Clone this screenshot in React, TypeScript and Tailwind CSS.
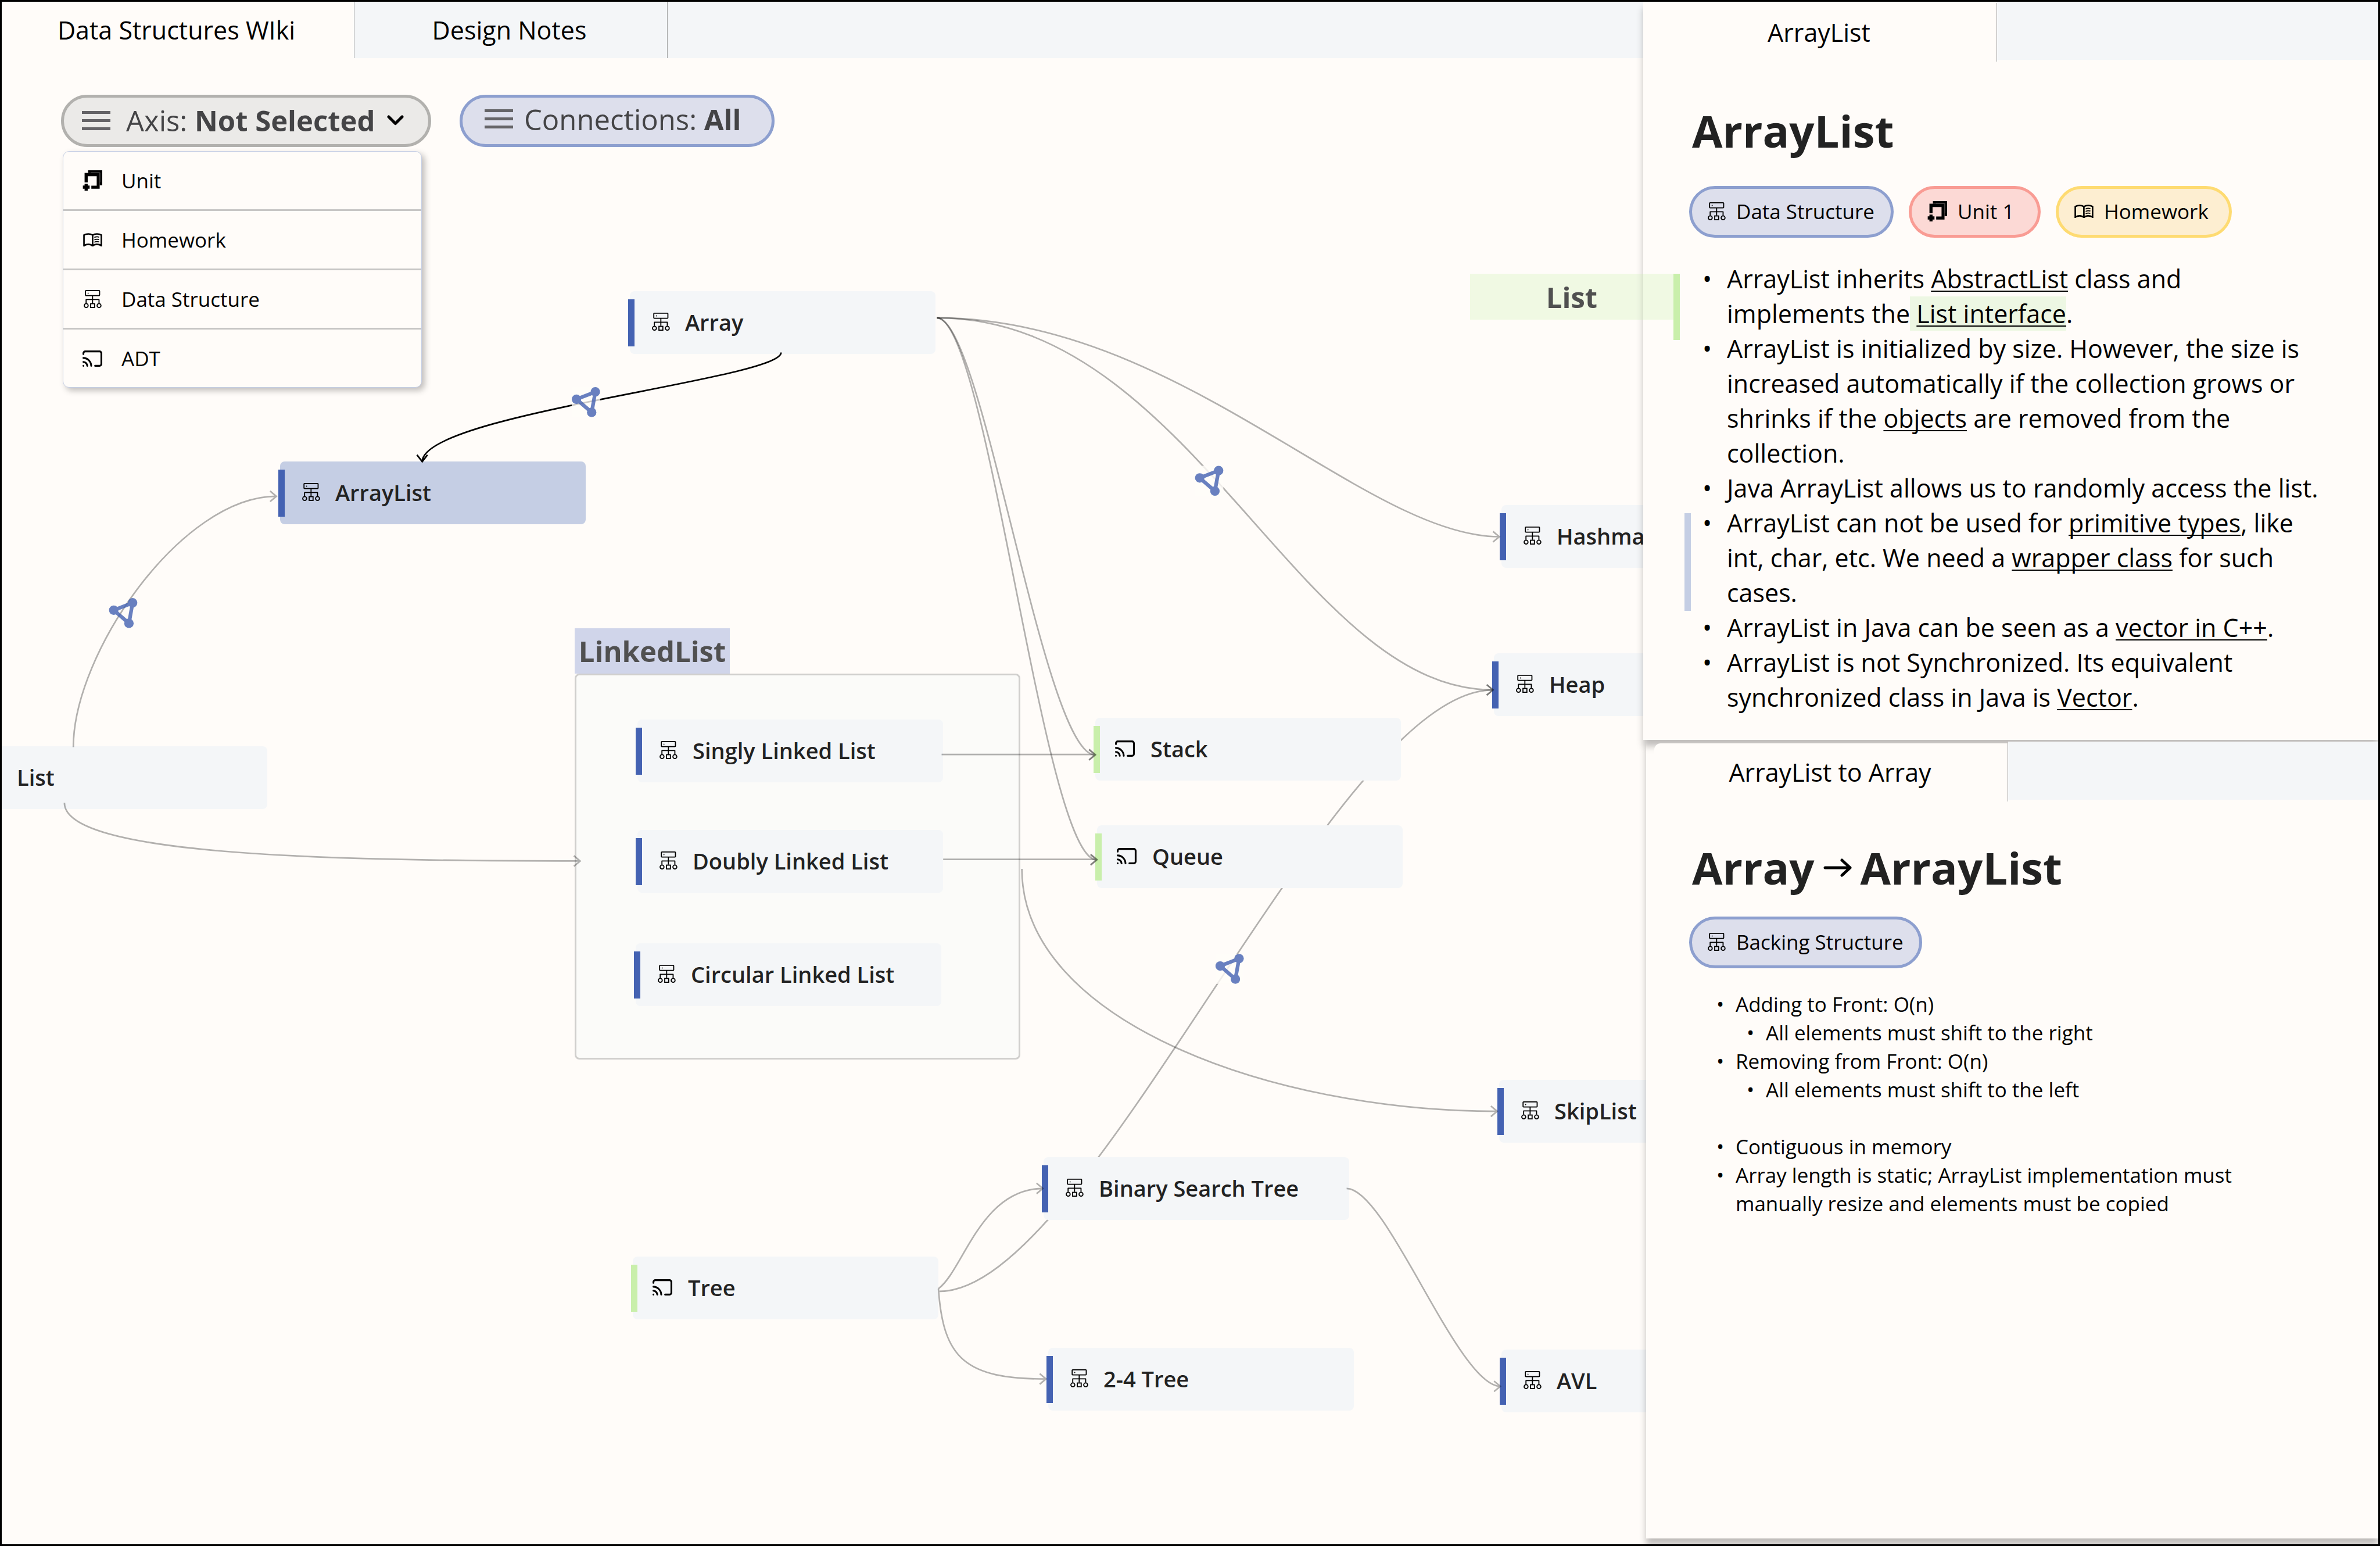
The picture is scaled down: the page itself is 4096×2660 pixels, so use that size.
import type { ReactNode } from "react";

function StructureIcon() {
  return (
    <svg viewBox="0 0 34 34" className="h-[31px] w-[31px] shrink-0" fill="none" stroke="currentColor" strokeWidth="2" aria-hidden="true">
      <rect x="3.5" y="1" width="26.6" height="9.6" rx="1" />
      <circle cx="8.4" cy="6" r="1" fill="currentColor" stroke="none" />
      <path d="M16.8 11v14M4.6 25v-7h24.4v7" strokeLinejoin="round" />
      <circle cx="4.8" cy="29.3" r="3.7" />
      <circle cx="29" cy="29.3" r="3.7" />
      <rect x="13.2" y="25.8" width="7.4" height="7.2" />
    </svg>
  );
}

function UnitIcon() {
  return (
    <svg viewBox="0 0 38 39" className="h-[35px] w-[34px] shrink-0" fill="currentColor" aria-hidden="true">
      <path d="M10.7 0H38V28.7H33V5H10.7Z" />
      <path d="M4 5H33V35.5H17V29.5H27.3V11.3H10V23H4Z" />
      <path d="M4 26H10V29.3H13.7V35.5H10V39H4V35.5H0.7V29.3H4Z" />
      <path d="M16.5 4.4H33.8V23" fill="none" stroke="#777" strokeWidth="0.7" />
    </svg>
  );
}

function BookIcon() {
  return (
    <svg viewBox="0 0 37 26" className="h-[23px] w-[33px] shrink-0" fill="none" stroke="currentColor" strokeWidth="3" aria-hidden="true">
      <path d="M1.6 26V3.8C6 1 14 .8 18.4 4C22.8 .8 31 1 35.3 3.8V26" />
      <path d="M2 24C8 20.6 15 21.4 18.4 25C21.8 21.4 29 20.6 35 24M18.4 4V25" />
      <path d="M21.8 8.6q4.5-2.2 9.2-.6M21.8 13.2q4.5-2.2 9.2-.6M21.8 17.8q4.5-2.2 9.2-.6" strokeWidth="2" />
    </svg>
  );
}

function CastIcon() {
  return (
    <svg viewBox="1 3 22 18" className="h-[28px] w-[34px] shrink-0" fill="none" stroke="currentColor" strokeWidth="2" strokeLinecap="round" strokeLinejoin="round" aria-hidden="true">
      <path d="M2 7V6a2 2 0 0 1 2-2h16a2 2 0 0 1 2 2v12a2 2 0 0 1-2 2h-5" />
      <path d="M2 11.3a9 9 0 0 1 8.7 8.7M2 15.7a5 5 0 0 1 4.3 4.3M2 20h.01" />
    </svg>
  );
}

function MenuIcon() {
  return (
    <svg viewBox="0 0 49 33" className="h-[33px] w-[49px] shrink-0" fill="#656467" aria-hidden="true">
      <rect width="49" height="5" />
      <rect y="14" width="49" height="5" />
      <rect y="28" width="49" height="5" />
    </svg>
  );
}

type Kind = "structure" | "adt" | "plain";

const nodes: { label: string; kind: Kind; place: string; selected?: boolean }[] = [
  { label: "Array", kind: "structure", place: "left-[1081px] top-[401px]" },
  { label: "ArrayList", kind: "structure", place: "left-[479px] top-[694px]", selected: true },
  { label: "List", kind: "plain", place: "left-[-69px] top-[1184px]" },
  { label: "Singly Linked List", kind: "structure", place: "left-[1094px] top-[1138px]" },
  { label: "Doubly Linked List", kind: "structure", place: "left-[1094px] top-[1328px]" },
  { label: "Circular Linked List", kind: "structure", place: "left-[1091px] top-[1523px]" },
  { label: "Stack", kind: "adt", place: "left-[1882px] top-[1135px]" },
  { label: "Queue", kind: "adt", place: "left-[1885px] top-[1320px]" },
  { label: "Hashmap", kind: "structure", place: "left-[2581px] top-[769px]" },
  { label: "Heap", kind: "structure", place: "left-[2568px] top-[1024px]" },
  { label: "SkipList", kind: "structure", place: "left-[2577px] top-[1758px]" },
  { label: "Tree", kind: "adt", place: "left-[1086px] top-[2062px]" },
  { label: "Binary Search Tree", kind: "structure", place: "left-[1793px] top-[1891px]" },
  { label: "2-4 Tree", kind: "structure", place: "left-[1801px] top-[2219px]" },
  { label: "AVL", kind: "structure", place: "left-[2581px] top-[2222px]" },
];

function GraphNode({ label, kind, place, selected }: (typeof nodes)[number]) {
  return (
    <button
      type="button"
      className={`absolute flex h-[108px] w-[526px] items-center gap-[23px] rounded-[8px] pb-[3px] pl-[34px] text-left text-[38px] leading-[52px] font-semibold text-[#222222] ${place} ${selected ? "bg-[#c5cee4]" : "bg-[#f4f6f8]"}`}
    >
      {kind !== "plain" && (
        <span className={`absolute top-[14px] left-[-3px] h-[81px] w-[11px] ${kind === "adt" ? "bg-[#c9efab]" : "bg-[#4462b2]"}`} />
      )}
      <span className={`flex w-[38px] text-black ${kind === "adt" ? "justify-start" : "justify-center"}`}>
        {kind === "structure" && <StructureIcon />}
        {kind === "adt" && <CastIcon />}
      </span>
      {label}
    </button>
  );
}

/* Each edge ends in an open arrow head drawn at its last point. */
const edges = [
  "M139 1424C139 1244 346 946 526 946M514 936L526 946L514 956",
  "M122 1530C122 1628 600 1641 1105 1641M1093 1631L1105 1641L1093 1651",
  "M1785 606C2245 606 2600 1023 2857 1023M2845 1013L2857 1023L2845 1033",
  "M1785 606C2271 606 2474 1315 2845 1315M2833 1305L2845 1315L2833 1325",
  "M1785 606C1873 606 1988 1439 2087 1439M2075 1429L2087 1439L2075 1449",
  "M1785 606C1882 606 1988 1639 2090 1639M2078 1629L2090 1639L2078 1649",
  "M1794 1438H2087M2075 1428L2087 1438L2075 1448",
  "M1797 1638H2090M2078 1628L2090 1638L2078 1648",
  "M1947 1656C1947 1946 2423 2118 2853 2118M2841 2108L2853 2118L2841 2128",
  "M1788 2456C1836 2420 1868 2266 1987 2265M1975 2255L1987 2265L1975 2275",
  "M1788 2456C1797 2590 1840 2628 1993 2628M1981 2618L1993 2628L1981 2638",
  "M2566 2265C2643 2265 2778 2642 2859 2642M2847 2632L2859 2642L2847 2652",
];

function Relation({ x, y, veil }: { x: number; y: number; veil?: boolean }) {
  return (
    <g transform={`translate(${x} ${y})`}>
      {veil && <rect width="54" height="57" fill="#fffcf9" fillOpacity="0.8" stroke="none" />}
      <g opacity="0.8" stroke="#4462b2" fill="#4462b2" strokeWidth="7">
        <path d="M9 23L45 9L38 48Z" fill="none" />
        <circle cx="9" cy="23" r="9" stroke="none" />
        <circle cx="45" cy="9" r="9" stroke="none" />
        <circle cx="38" cy="48" r="9" stroke="none" />
      </g>
    </g>
  );
}

function EdgeLayer({ children }: { children: ReactNode }) {
  return (
    <svg
      viewBox="3 111 3129 2832"
      className="pointer-events-none absolute top-0 left-0 h-[2557px] w-[2826px] overflow-visible"
      fill="none"
      stroke="black"
      strokeWidth="3"
      aria-hidden="true"
    >
      {children}
    </svg>
  );
}

const axes = [
  { label: "Unit", icon: <UnitIcon /> },
  { label: "Homework", icon: <BookIcon /> },
  { label: "Data Structure", icon: <StructureIcon /> },
  { label: "ADT", icon: <CastIcon /> },
];

function Graph() {
  return (
    <main className="relative flex-1 overflow-hidden">
      <EdgeLayer>
        <path d="M1790 2461C2077 2461 2541 1315 2845 1315" strokeOpacity="0.3" />
      </EdgeLayer>

      <section className="absolute top-[981px] left-[986px] w-[767px]">
        <h2 className="w-[267px] bg-[#d0d5ea] text-center text-[49px] leading-[78px] font-bold text-[#505050]">LinkedList</h2>
        <div className="h-[664px] rounded-[8px] border-[3px] border-[#d0cfcd] bg-[#fbfbf9]" />
      </section>

      {nodes.map((node) => (
        <GraphNode key={node.label} {...node} />
      ))}

      <EdgeLayer>
        {edges.map((d) => (
          <path key={d} d={d} strokeOpacity="0.3" />
        ))}
        <path d="M2833 1305L2845 1315L2833 1325" strokeOpacity="0.3" />
        <path d="M1488 672C1488 723 804 789 804 880M794 867L804 880L814 867" />
        <Relation x={1089} y={738} veil />
        <Relation x={2277} y={888} veil />
        <Relation x={207} y={1140} />
        <Relation x={2316} y={1818} veil />
      </EdgeLayer>

      <div className="relative flex items-start gap-[49px] pt-[63px] pl-[102px] text-[49px] leading-[66px] text-[#444446]">
        <div className="relative">
          <button type="button" aria-expanded="true" className="flex h-[90px] w-[637px] items-center rounded-full border-[5px] border-[#b2b1ae] bg-[#ebeae8] pb-[2px] pl-[31px]">
            <MenuIcon />
            <span className="ml-[27px]">
              Axis: <b>Not Selected</b>
            </span>
            <svg viewBox="0 0 29 18" className="ml-[21px] h-[18px] w-[29px]" fill="none" stroke="black" strokeWidth="5" strokeLinecap="round" strokeLinejoin="round" aria-hidden="true">
              <path d="M3 3L14.5 14.5L26 3" />
            </svg>
          </button>
          <ul className="absolute top-[97px] left-[3px] w-[618px] divide-y-[3px] divide-[#c7c6c5] rounded-[11px] border border-[#c5cee4] bg-[#fffcf9] text-[35px] leading-[48px] text-black shadow-[5px_5px_11px_rgba(0,0,0,0.25)]">
            {axes.map((axis) => (
              <li key={axis.label}>
                <button type="button" className="flex h-[99px] w-full items-center gap-[31px] pl-[31px] text-left">
                  <span className="flex w-[38px] justify-center">{axis.icon}</span>
                  {axis.label}
                </button>
              </li>
            ))}
          </ul>
        </div>
        <button type="button" className="flex h-[90px] w-[542px] items-center gap-[19px] rounded-full border-[5px] border-[#8d9fcf] bg-[#dddfec] pb-[7px] pl-[38px]">
          <MenuIcon />
          <span>
            Connections: <b>All</b>
          </span>
        </button>
      </div>
    </main>
  );
}

const tagTones = {
  blue: "border-[#8d9fcf] bg-[#dddfec]",
  red: "border-[#f99c94] bg-[#fcd9d5]",
  yellow: "border-[#fedb72] bg-[#fdeed1]",
};

function Tag({ tone, width, icon, children }: { tone: keyof typeof tagTones; width: string; icon: ReactNode; children: ReactNode }) {
  return (
    <li className={`flex h-[89px] items-center gap-[18px] rounded-full border-[5px] pb-[2px] pl-[27px] text-[35px] leading-[48px] whitespace-nowrap ${width} ${tagTones[tone]}`}>
      {icon}
      {children}
    </li>
  );
}

function Term({ children }: { children: ReactNode }) {
  return (
    <a href="#" className="underline decoration-2 underline-offset-[4px] [text-decoration-skip-ink:none]">
      {children}
    </a>
  );
}

const note = "relative before:absolute before:left-[-42px] before:content-['•']";
const smallNote = "relative before:absolute before:left-[-33px] before:content-['•']";

export default function App() {
  return (
    <div className="flex min-h-screen overflow-hidden border-[3px] border-black bg-[#fffcf9] font-['Open_Sans',sans-serif] text-black">
      <div className="-mr-[5px] flex min-w-0 flex-1 flex-col">
        <nav role="tablist" className="flex h-[97px] bg-[#f4f6f8] text-[43px] leading-[60px]">
          <button type="button" role="tab" aria-selected="true" className="w-[607px] border-r border-[#a5a5a5] bg-[#fffcf9] pr-[5px]">
            Data Structures WIki
          </button>
          <button type="button" role="tab" aria-selected="false" className="w-[539px] border-r border-[#a5a5a5] pr-[5px]">
            Design Notes
          </button>
        </nav>
        <Graph />
      </div>

      <aside className="relative flex w-[1265px] shrink-0 flex-col">
        <section className="relative z-10 bg-[#fffcf9] pb-[43px] shadow-[0_11px_11px_rgba(0,0,0,0.25)]">
          <div role="tablist" className="flex items-start text-[43px] leading-[60px]">
            <button type="button" role="tab" aria-selected="true" className="mt-[2px] h-[101px] w-[609px] border-r border-[#a5a5a5] pr-[3px]">
              ArrayList
            </button>
            <div className="h-[100px] flex-1 bg-[#f4f6f8]" />
          </div>
          <h1 className="mt-[67px] ml-[84px] text-[76px] leading-[104px] font-bold text-[#222222]">ArrayList</h1>
          <ul className="mt-[43px] ml-[79px] flex gap-[26px]">
            <Tag tone="blue" width="w-[352px]" icon={<StructureIcon />}>Data Structure</Tag>
            <Tag tone="red" width="w-[227px]" icon={<UnitIcon />}>Unit 1</Tag>
            <Tag tone="yellow" width="w-[303px]" icon={<BookIcon />}>Homework</Tag>
          </ul>
          <ul className="mt-[41px] ml-[144px] w-[1021px] text-[43px] leading-[60px]">
            <li className={note}>
              ArrayList inherits <Term>AbstractList</Term> class and implements the
              <span className="bg-[#edf7e3]"> <Term>List interface</Term></span>.
              <span className="absolute top-[21px] left-[-442px] flex h-[79px] w-[350px] items-center justify-center bg-[#c9efab]/28 text-[49px] font-bold text-[#505050]">
                List
              </span>
              <span className="absolute top-[21px] left-[-92px] h-[114px] w-[11px] bg-[#c9efab]" />
            </li>
            <li className={note}>
              ArrayList is initialized by size. However, the size is increased automatically if the collection grows or shrinks if the{" "}
              <Term>objects</Term> are removed from the collection.
            </li>
            <li className={note}>Java ArrayList allows us to randomly access the list.</li>
            <li className={note}>
              <span className="absolute top-[13px] left-[-73px] h-[168px] w-[11px] bg-[#c5cee4]" />
              ArrayList can not be used for <Term>primitive types</Term>, like int, char, etc. We need a <Term>wrapper class</Term> for such cases.
            </li>
            <li className={note}>
              ArrayList in Java can be seen as a <Term>vector in C++</Term>.
            </li>
            <li className={note}>
              ArrayList is not Synchronized. Its equivalent synchronized class in Java is <Term>Vector</Term>.
            </li>
          </ul>
        </section>

        <section className="mb-[10px] ml-[5px] flex-1 bg-[#fffcf9] shadow-[0_11px_11px_rgba(0,0,0,0.25)]">
          <div role="tablist" className="relative z-20 flex items-start pt-[3px] pl-[14px] text-[43px] leading-[60px]">
            <button type="button" role="tab" aria-selected="true" className="mt-[3px] h-[100px] w-[609px] rounded-tl-[11px] border-r border-[#a5a5a5] bg-[#fffcf9] pr-[3px]">
              ArrayList to Array
            </button>
            <div className="h-[100px] flex-1 bg-[#f4f6f8]" />
          </div>
          <h2 className="mt-[62px] ml-[79px] flex items-center text-[76px] leading-[104px] font-bold text-[#222222]">
            Array
            <svg viewBox="0 0 49 32" className="mx-[15px] h-[32px] w-[49px]" fill="none" stroke="black" strokeWidth="5" strokeLinecap="round" strokeLinejoin="round" role="img" aria-label="to">
              <path d="M3 16H46M32 3L46 16L32 29" />
            </svg>
            ArrayList
          </h2>
          <ul className="mt-[32px] ml-[74px] flex">
            <Tag tone="blue" width="w-[401px]" icon={<StructureIcon />}>Backing Structure</Tag>
          </ul>
          <ul className="mt-[37px] mr-[180px] ml-[154px] text-[35px] leading-[49px]">
            <li className={smallNote}>
              Adding to Front: O(n)
              <ul className="pl-[52px]">
                <li className={smallNote}>All elements must shift to the right</li>
              </ul>
            </li>
            <li className={smallNote}>
              Removing from Front: O(n)
              <ul className="pl-[52px]">
                <li className={smallNote}>All elements must shift to the left</li>
              </ul>
            </li>
            <li className={`mt-[49px] ${smallNote}`}>Contiguous in memory</li>
            <li className={smallNote}>Array length is static; ArrayList implementation must manually resize and elements must be copied</li>
          </ul>
        </section>
      </aside>
    </div>
  );
}
